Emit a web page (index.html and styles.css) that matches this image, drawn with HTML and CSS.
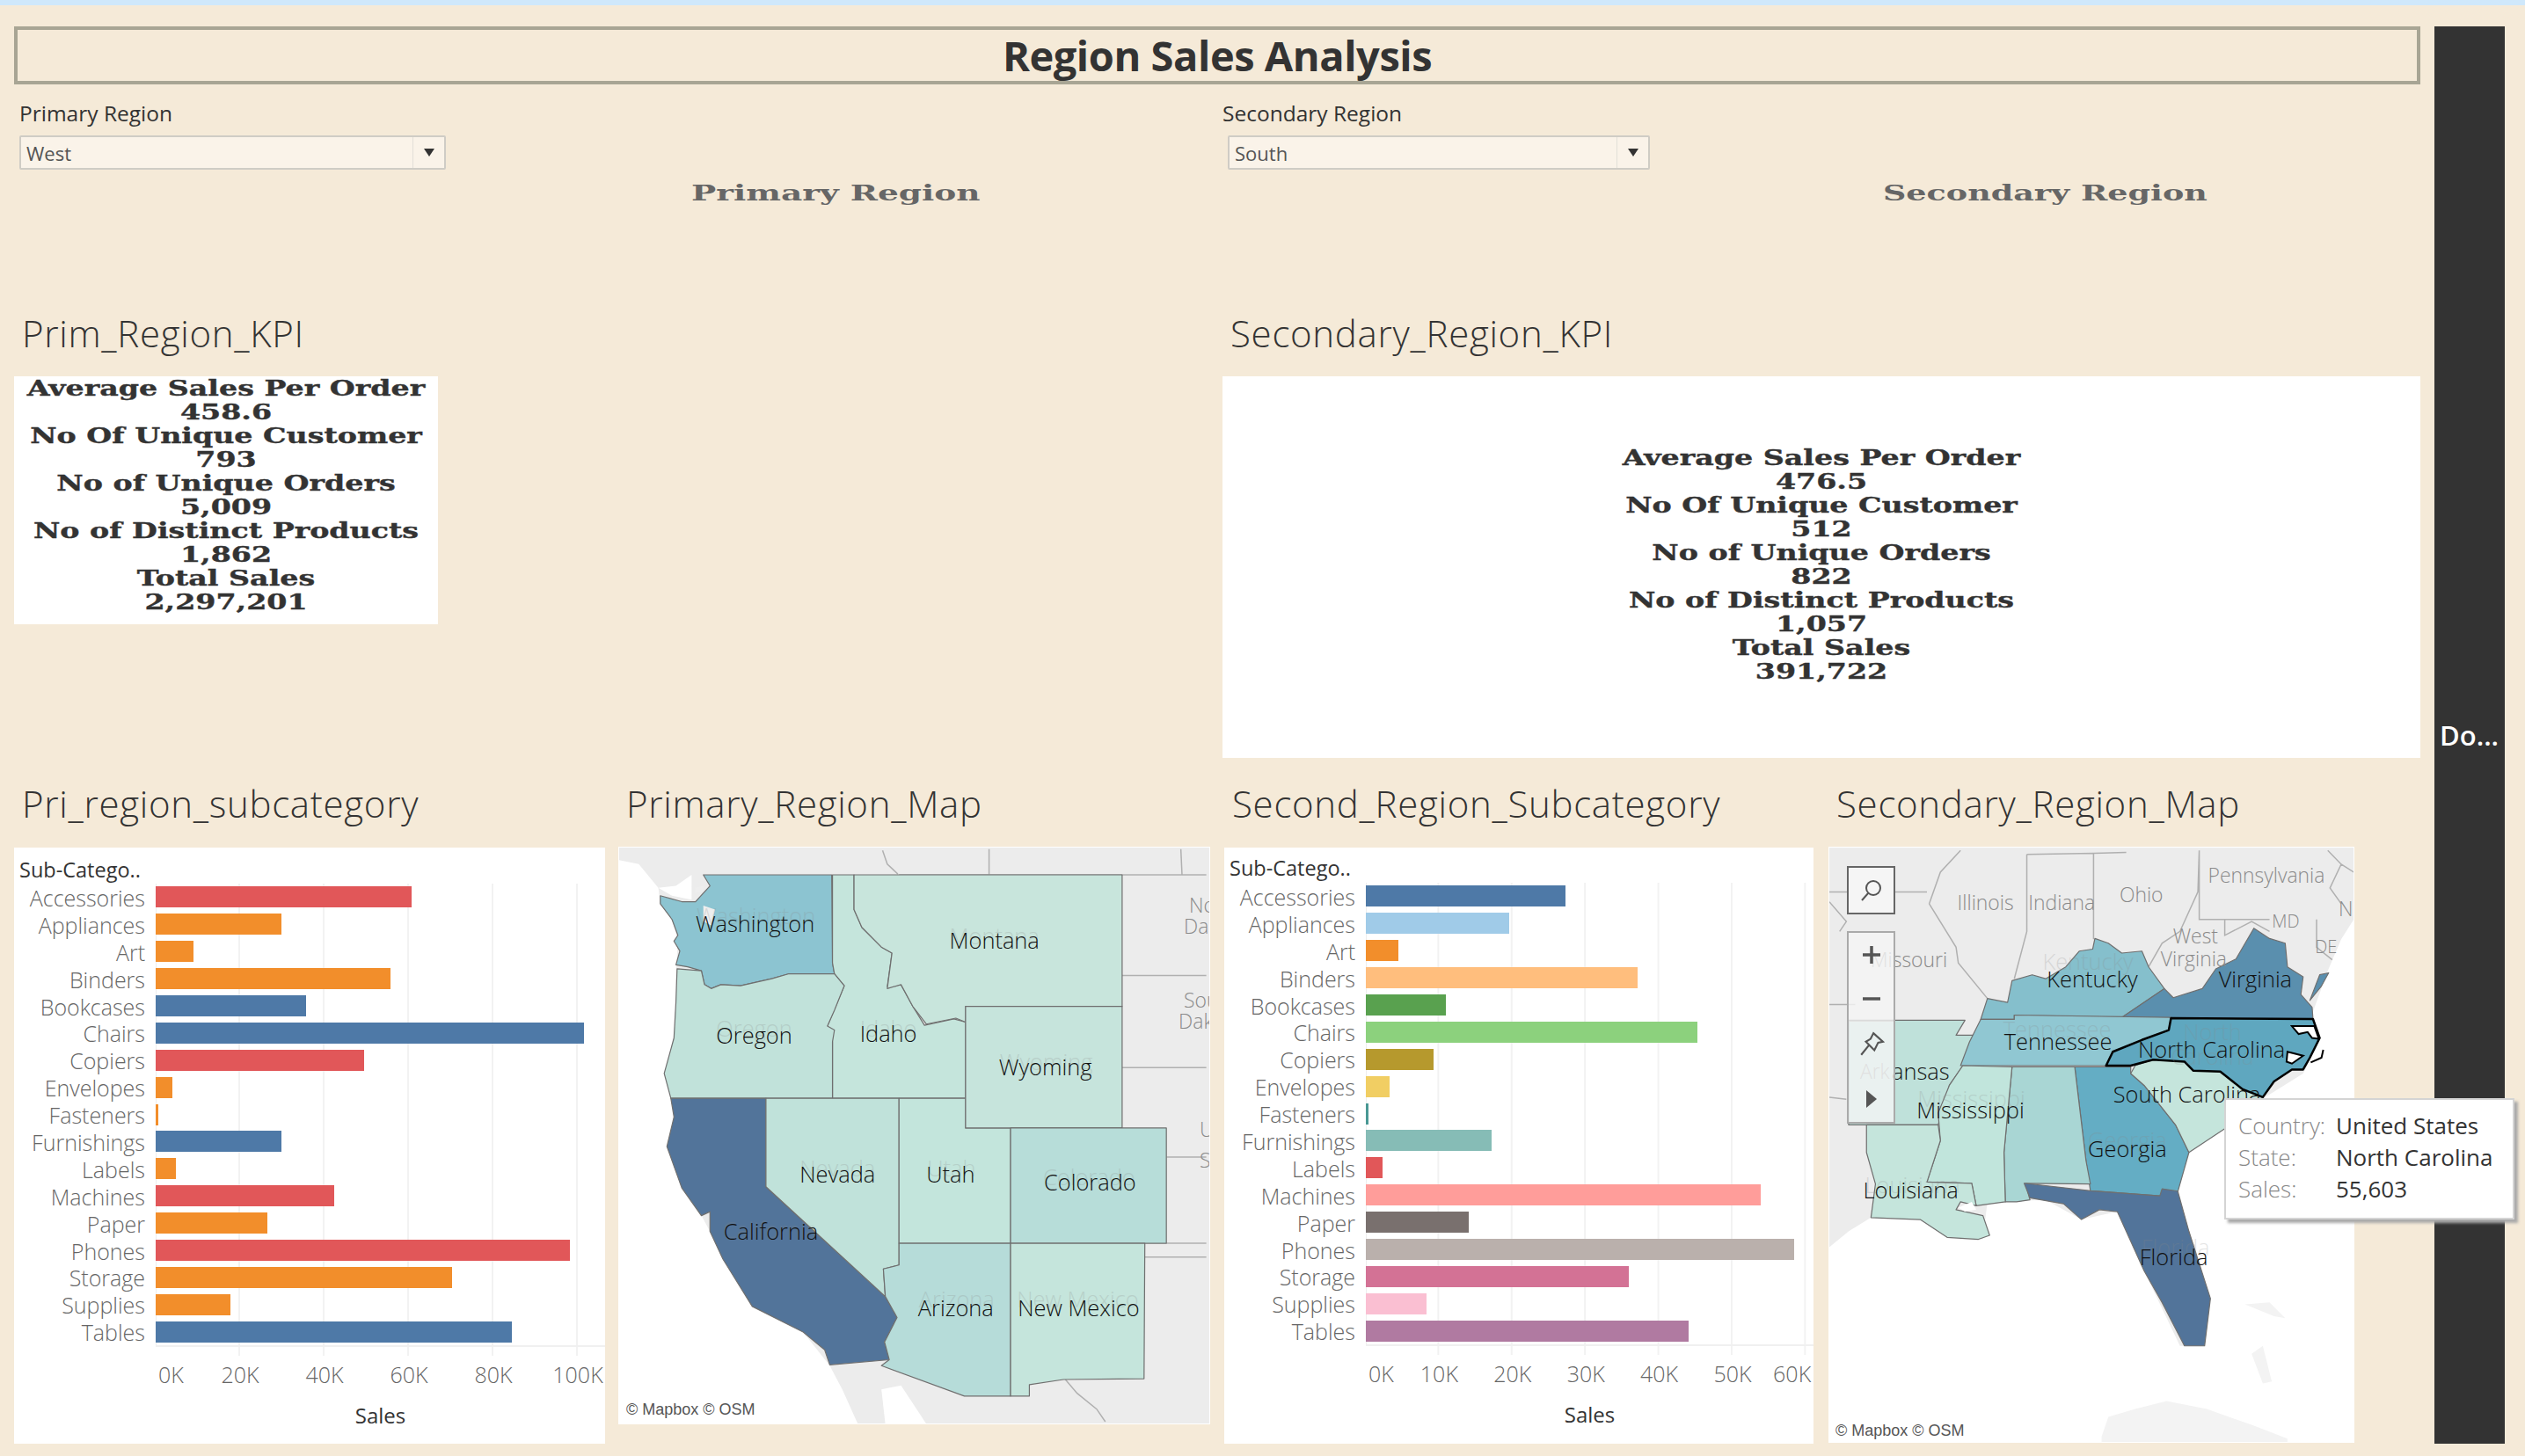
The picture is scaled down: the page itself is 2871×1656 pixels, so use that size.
FILE: index.html
```html
<!DOCTYPE html>
<html lang="en">
<head>
<meta charset="utf-8">
<title>Region Sales Analysis</title>
<link rel="stylesheet" href="styles.css">
</head>
<body>
<div class="strip"></div>
<div class="dash">
  <main class="main">
    <h1 class="title">Region Sales Analysis</h1>
    <section class="upper">
      <div class="col">
        <div class="filter-label">Primary Region</div>
        <div class="select"><span class="select-value">West</span><span class="select-btn"><i class="arrow"></i></span></div>
        <h2 class="slab slab-a">Primary Region</h2>
        <h3 class="sheet-title kpi-title">Prim_Region_KPI</h3>
        <div class="kpi kpi-a">
          <p>Average Sales Per Order</p><p>458.6</p><p>No Of Unique Customer</p><p>793</p><p>No of Unique Orders</p><p>5,009</p><p>No of Distinct Products</p><p>1,862</p><p>Total Sales</p><p>2,297,201</p>
        </div>
      </div>
      <div class="col">
        <div class="filter-label">Secondary Region</div>
        <div class="select select-b"><span class="select-value">South</span><span class="select-btn"><i class="arrow"></i></span></div>
        <h2 class="slab slab-b">Secondary Region</h2>
        <h3 class="sheet-title kpi-title">Secondary_Region_KPI</h3>
        <div class="kpi kpi-b">
          <p>Average Sales Per Order</p><p>476.5</p><p>No Of Unique Customer</p><p>512</p><p>No of Unique Orders</p><p>822</p><p>No of Distinct Products</p><p>1,057</p><p>Total Sales</p><p>391,722</p>
        </div>
      </div>
    </section>
    <section class="lower">
      <div class="cell">
        <h3 class="sheet-title">Pri_region_subcategory</h3>
        <div class="chart chart-a">
          <div class="chart-head">Sub-Catego..</div>
          <div class="chart-body">
            <div class="labels"><div>Accessories</div><div>Appliances</div><div>Art</div><div>Binders</div><div>Bookcases</div><div>Chairs</div><div>Copiers</div><div>Envelopes</div><div>Fasteners</div><div>Furnishings</div><div>Labels</div><div>Machines</div><div>Paper</div><div>Phones</div><div>Storage</div><div>Supplies</div><div>Tables</div></div>
            <div class="axis-col">
              <div class="plot">
                <div class="row"><span class="bar red" style="width:291px"></span></div>
                <div class="row"><span class="bar orange" style="width:143px"></span></div>
                <div class="row"><span class="bar orange" style="width:43px"></span></div>
                <div class="row"><span class="bar orange" style="width:267px"></span></div>
                <div class="row"><span class="bar blue" style="width:171px"></span></div>
                <div class="row"><span class="bar blue" style="width:487px"></span></div>
                <div class="row"><span class="bar red" style="width:237px"></span></div>
                <div class="row"><span class="bar orange" style="width:19px"></span></div>
                <div class="row"><span class="bar orange" style="width:3px"></span></div>
                <div class="row"><span class="bar blue" style="width:143px"></span></div>
                <div class="row"><span class="bar orange" style="width:23px"></span></div>
                <div class="row"><span class="bar red" style="width:203px"></span></div>
                <div class="row"><span class="bar orange" style="width:127px"></span></div>
                <div class="row"><span class="bar red" style="width:471px"></span></div>
                <div class="row"><span class="bar orange" style="width:337px"></span></div>
                <div class="row"><span class="bar orange" style="width:85px"></span></div>
                <div class="row"><span class="bar blue" style="width:405px"></span></div>
              </div>
              <div class="tickmarks"></div>
              <div class="ticks"><span class="tick-zero">0K</span><span>20K</span><span>40K</span><span>60K</span><span>80K</span><span>100K</span></div>
              <div class="axis-title">Sales</div>
            </div>
          </div>
        </div>
      </div>
      <div class="cell">
        <h3 class="sheet-title">Primary_Region_Map</h3>
        <div class="map map-a">
          <svg class="map-svg" viewBox="0 0 673 657" role="img" aria-label="Primary region map">
            <g transform="scale(.4464 .4505) translate(-30 -28)">
              <rect class="land" x="30" y="28" width="1510" height="1460"/>
              <path class="ocean" d="M30 60 L80 70 L130 130 L135 170 L165 210 L180 265 L175 340 L175 420 L170 510 L145 600 L162 663 L170 710 L152 785 L190 890 L240 960 L262 1000 L295 1070 L370 1190 L500 1255 L568 1340 L600 1400 L640 1488 L30 1488 Z"/>
              <path class="ocean" d="M700 1400 L750 1390 L790 1450 L815 1488 L710 1488 Z"/>
              <path class="ocean" d="M215 97 L175 125 L130 130 L165 150 L215 160 Z"/>
              <path class="nb" d="M703 35 L715 70 L742 95 M975 32 L975 97 M1465 32 L1468 97 M745 97 L1530 97 M1315 352 L1530 352 M1315 585 L1530 585 M1428 812 L1530 812 M1428 1030 L1530 1030 M1373 1065 L1530 1065 M1170 1375 L1200 1410 L1250 1450 L1272 1482"/>
              <path class="st f-wa" d="M245 97 L573 97 L575 320 L580 348 L462 348 L420 360 L340 378 L290 375 L265 385 L248 375 L240 340 L205 330 L175 325 L185 290 L170 265 L180 250 L165 210 L135 170 L135 150 L190 165 L225 165 L262 125 L245 97 Z"/>
              <path class="hole" d="M225 130 L245 125 L245 140 L225 142 Z M245 175 L275 185 L265 225 L245 215 Z"/>
              <path class="st f-id" d="M575 97 L630 97 L630 185 L650 230 L700 280 L727 295 L715 380 L750 375 L780 430 L810 478 L885 462 L915 470 L915 663 L575 663 L575 520 L562 480 L605 378 L580 348 L575 320 Z"/>
              <path class="st f-mt" d="M630 97 L1315 97 L1315 430 L915 430 L915 470 L890 460 L815 475 L780 430 L750 375 L715 385 L727 295 L700 280 L650 230 L630 185 Z"/>
              <path class="st f-or" d="M178 335 L240 340 L248 375 L265 385 L290 375 L340 378 L420 360 L462 348 L580 348 L605 378 L580 440 L562 480 L580 490 L575 520 L575 663 L162 663 L145 600 L170 510 L175 420 Z"/>
              <path class="st f-ca" d="M162 663 L405 663 L405 887 L710 1165 L740 1218 L708 1280 L720 1325 L568 1338 L555 1300 L500 1255 L370 1190 L295 1070 L262 1000 L262 950 L240 960 L190 890 L152 785 L170 710 Z"/>
              <path class="st f-nv" d="M405 663 L745 663 L745 1085 L705 1095 L710 1165 L405 887 Z"/>
              <path class="st f-ut" d="M745 663 L915 663 L915 738 L1030 738 L1030 1030 L745 1030 Z"/>
              <path class="st f-wy" d="M915 430 L1315 430 L1315 738 L915 738 Z"/>
              <path class="st f-co" d="M1030 738 L1428 738 L1428 1030 L1030 1030 Z"/>
              <path class="st f-az" d="M745 1030 L1030 1030 L1030 1417 L912 1417 L700 1340 L720 1325 L708 1280 L740 1218 L710 1165 L705 1095 L745 1085 Z"/>
              <path class="st f-nm" d="M1030 1030 L1373 1030 L1371 1373 L1165 1375 L1078 1388 L1078 1417 L1030 1417 Z"/>
              <path class="ocean" d="M380 1235 L430 1235 L425 1245 L395 1245 Z M485 1272 L500 1285 L490 1290 Z M483 1305 L498 1318 L488 1320 Z"/>
            </g>
            <text class="nb-label" x="650" y="74">North</text>
            <text class="nb-label" x="644" y="98">Dakota</text>
            <text class="nb-label" x="644" y="183">South</text>
            <text class="nb-label" x="638" y="207">Dakota</text>
            <text class="nb-label" x="662" y="330">United</text>
            <text class="nb-label" x="662" y="365">States</text>
            <text class="ghost" x="156" y="87" text-anchor="middle">Washington</text>
            <text class="ghost" x="428" y="110" text-anchor="middle">Montana</text>
            <text class="ghost" x="154" y="216" text-anchor="middle">Oregon</text>
            <text class="ghost" x="307" y="216" text-anchor="middle">Idaho</text>
            <text class="ghost" x="487" y="254" text-anchor="middle">Wyoming</text>
            <text class="ghost" x="249" y="375" text-anchor="middle">Nevada</text>
            <text class="ghost" x="379" y="375" text-anchor="middle">Utah</text>
            <text class="ghost" x="536" y="385" text-anchor="middle">Colorado</text>
            <text class="ghost" x="172" y="445" text-anchor="middle">California</text>
            <text class="ghost" x="385" y="525" text-anchor="middle">Arizona</text>
            <text class="ghost" x="523" y="525" text-anchor="middle">New Mexico</text>
            <text class="state" x="155" y="96" text-anchor="middle">Washington</text>
            <text class="state" x="428" y="115" text-anchor="middle">Montana</text>
            <text class="state" x="154" y="224" text-anchor="middle">Oregon</text>
            <text class="state" x="307" y="222" text-anchor="middle">Idaho</text>
            <text class="state" x="486" y="260" text-anchor="middle">Wyoming</text>
            <text class="state" x="249" y="382" text-anchor="middle">Nevada</text>
            <text class="state" x="378" y="382" text-anchor="middle">Utah</text>
            <text class="state" x="537" y="391" text-anchor="middle">Colorado</text>
            <text class="state" x="173" y="447" text-anchor="middle">California</text>
            <text class="state" x="384" y="535" text-anchor="middle">Arizona</text>
            <text class="state" x="524" y="535" text-anchor="middle">New Mexico</text>
          </svg>
          <div class="attrib attrib-a">© Mapbox © OSM</div>
        </div>
      </div>
      <div class="cell">
        <h3 class="sheet-title">Second_Region_Subcategory</h3>
        <div class="chart chart-b">
          <div class="chart-head">Sub-Catego..</div>
          <div class="chart-body">
            <div class="labels"><div>Accessories</div><div>Appliances</div><div>Art</div><div>Binders</div><div>Bookcases</div><div>Chairs</div><div>Copiers</div><div>Envelopes</div><div>Fasteners</div><div>Furnishings</div><div>Labels</div><div>Machines</div><div>Paper</div><div>Phones</div><div>Storage</div><div>Supplies</div><div>Tables</div></div>
            <div class="axis-col">
              <div class="plot">
                <div class="row"><span class="bar c1" style="width:227px"></span></div>
                <div class="row"><span class="bar c2" style="width:163px"></span></div>
                <div class="row"><span class="bar c3" style="width:37px"></span></div>
                <div class="row"><span class="bar c4" style="width:309px"></span></div>
                <div class="row"><span class="bar c5" style="width:91px"></span></div>
                <div class="row"><span class="bar c6" style="width:377px"></span></div>
                <div class="row"><span class="bar c7" style="width:77px"></span></div>
                <div class="row"><span class="bar c8" style="width:27px"></span></div>
                <div class="row"><span class="bar c9" style="width:3px"></span></div>
                <div class="row"><span class="bar c10" style="width:143px"></span></div>
                <div class="row"><span class="bar c11" style="width:19px"></span></div>
                <div class="row"><span class="bar c12" style="width:449px"></span></div>
                <div class="row"><span class="bar c13" style="width:117px"></span></div>
                <div class="row"><span class="bar c14" style="width:487px"></span></div>
                <div class="row"><span class="bar c15" style="width:299px"></span></div>
                <div class="row"><span class="bar c16" style="width:69px"></span></div>
                <div class="row"><span class="bar c17" style="width:367px"></span></div>
              </div>
              <div class="tickmarks"></div>
              <div class="ticks"><span class="tick-zero">0K</span><span>10K</span><span>20K</span><span>30K</span><span>40K</span><span>50K</span><span class="tick-last">60K</span></div>
              <div class="axis-title">Sales</div>
            </div>
          </div>
        </div>
      </div>
      <div class="cell">
        <h3 class="sheet-title">Secondary_Region_Map</h3>
        <div class="map map-b">
          <svg class="map-svg" viewBox="0 0 598 678" role="img" aria-label="Secondary region map">
            <g transform="scale(.5109 .4505) translate(-17 -28)">
              <rect class="land" x="17" y="28" width="1172" height="1510"/>
              <path class="ocean" d="M1188 210 L1160 260 L1130 340 L1095 450 L1110 520 L1075 600 L990 660 L900 740 L820 800 L795 900 L860 1150 L850 1290 L800 1290 L720 1100 L660 950 L580 970 L500 920 L370 925 L360 1020 L280 1015 L220 970 L110 965 L60 1000 L17 1040 L17 1538 L1188 1538 Z"/>
              <path class="cuba" d="M625 1520 L640 1470 L700 1450 L770 1430 L860 1450 L960 1490 L1040 1525 L1040 1538 L625 1538 Z M960 1310 L985 1290 L1005 1380 L985 1385 Z M945 1185 L1000 1180 L1035 1220 L1010 1215 Z"/>
              <path class="nb" d="M458 45 L458 240 L430 360 M607 42 L607 260 M458 45 L607 42 L680 40 M843 35 L843 210 L1000 210 M240 170 L265 90 L310 35 M240 170 L300 280 L305 320 L370 410 M17 140 L235 140 M17 425 L75 425 M900 210 L900 250 L960 215 L1000 240 M1105 210 L1105 280 L1140 312 M1130 35 L1160 70 L1188 90 M1160 70 L1135 130 L1160 170 M730 330 L760 270 L800 240 L840 140 L843 35 M17 165 L55 215 L40 240 M17 660 L55 665"/>
              <path class="st f-ar" d="M60 465 L320 465 L300 503 L340 503 L315 580 L285 630 L260 730 L60 730 Z"/>
              <path class="st f-ky" d="M370 410 L415 420 L425 365 L470 350 L500 360 L545 330 L575 290 L605 285 L610 258 L640 270 L670 295 L715 290 L730 330 L765 385 L670 458 L430 452 L430 463 L355 463 Z"/>
              <path class="st f-va" d="M670 458 L765 385 L785 408 L850 385 L880 335 L925 310 L965 232 L1000 258 L1035 270 L1040 330 L1075 355 L1070 400 L1095 432 L1097 462 L780 460 Z"/>
              <path class="st f-va" d="M1090 415 L1112 350 L1132 345 L1115 380 Z"/>
              <path class="st f-tn" d="M355 463 L430 463 L430 452 L780 458 L775 490 L715 515 L650 545 L635 580 L310 580 L330 520 Z"/>
              <path class="st f-ga" d="M565 583 L690 583 L690 600 L720 630 L790 730 L820 800 L795 900 L755 910 L600 897 L590 820 Z"/>
              <path class="st f-sc" d="M740 565 L810 570 L830 593 L890 595 L985 660 L900 740 L820 800 L790 730 L720 630 L690 600 L700 580 Z"/>
              <path class="st f-al" d="M425 583 L565 583 L590 820 L600 880 L455 878 L465 920 L435 925 L410 925 L407 800 Z"/>
              <path class="st f-ms" d="M315 580 L425 583 L407 800 L410 925 L345 935 L335 878 L235 875 L265 770 L260 700 L285 630 Z"/>
              <path class="st f-la" d="M100 730 L260 730 L265 770 L235 875 L335 878 L345 935 L310 925 L300 945 L360 960 L375 1010 L350 1020 L280 1015 L220 970 L110 965 L120 880 L100 800 Z"/>
              <path class="st f-fl" d="M452 878 L600 897 L755 910 L760 892 L795 898 L820 1000 L868 1170 L855 1290 L810 1290 L760 1180 L720 1100 L660 950 L620 945 L580 970 L540 930 L465 915 Z"/>
              <path class="st-sel f-nc" d="M780 460 L1097 462 L1112 510 L1090 560 L1075 590 L1050 590 L1010 620 L985 660 L940 640 L890 595 L830 593 L810 570 L740 565 L690 580 L635 580 L650 545 L715 515 L775 490 Z"/>
              <path class="sound" d="M1050 480 L1065 500 L1085 495 L1095 510 L1110 512 L1100 480 Z M1040 545 L1075 555 L1050 575 L1038 570 Z"/>
              <path class="st-line" d="M1120 540 L1116 560 L1092 572"/>
              <path class="ocean" d="M305 940 L335 925 L345 945 L320 950 Z"/>
            </g>
            <g transform="translate(0 -2)">
              <text class="nb-label" x="432" y="42">Pennsylvania</text>
              <text class="nb-label" x="146" y="73">Illinois</text>
              <text class="nb-label" x="227" y="73">Indiana</text>
              <text class="nb-label" x="331" y="64">Ohio</text>
              <text class="nb-label" x="581" y="80">N.</text>
              <text class="nb-label small" x="505" y="93">MD</text>
              <text class="nb-label" x="392" y="111">West</text>
              <text class="nb-label" x="378" y="137">Virginia</text>
              <text class="nb-label small" x="554" y="122">DE</text>
              <text class="nb-label" x="47" y="138">Missouri</text>
              <text class="nb-label" x="35" y="266">Ark</text>
              <text class="ghost" x="295" y="141" text-anchor="middle">Kentucky</text>
              <text class="ghost" x="260" y="219" text-anchor="middle">Tennessee</text>
              <text class="ghost" x="437" y="222" text-anchor="middle">North</text>
              <text class="ghost" x="437" y="250" text-anchor="middle">Carolina</text>
              <text class="ghost" x="162" y="298" text-anchor="middle">Mississippi</text>
              <text class="ghost" x="340" y="345" text-anchor="middle">Georgia</text>
              <text class="ghost" x="95" y="396" text-anchor="middle">Louisiana</text>
              <text class="ghost" x="395" y="467" text-anchor="middle">Florida</text>
              <text class="state" x="300" y="161" text-anchor="middle">Kentucky</text>
              <text class="state" x="486" y="161" text-anchor="middle">Virginia</text>
              <text class="state" x="261" y="233" text-anchor="middle">Tennessee</text>
              <text class="state" x="436" y="242" text-anchor="middle">North Carolina</text>
              <text class="state" x="137" y="267" text-anchor="end">ansas</text>
              <text class="state" x="161" y="311" text-anchor="middle">Mississippi</text>
              <text class="state" x="408" y="293" text-anchor="middle">South Carolina</text>
              <text class="state" x="340" y="355" text-anchor="middle">Georgia</text>
              <text class="state" x="93" y="402" text-anchor="middle">Louisiana</text>
              <text class="state" x="393" y="478" text-anchor="middle">Florida</text>
            </g>
          </svg>
          <div class="map-search">
            <svg class="ctl-icon" viewBox="0 0 28 28"><circle cx="16" cy="11" r="8"/><path d="M10 17 L3 25"/></svg>
          </div>
          <div class="map-tools">
            <div class="tool"><svg class="ctl-icon" viewBox="0 0 28 28"><path class="thick" d="M14 4 V24 M4 14 H24"/></svg></div>
            <div class="tool"><svg class="ctl-icon" viewBox="0 0 28 28"><path class="thick" d="M4 14 H24"/></svg></div>
            <div class="tool tool-pin"><svg class="ctl-icon pin-icon" viewBox="0 0 28 28"><path d="M16 2 L26 11 L21 12 L17 20 L14 17 L8 11 L13 8 Z M11 15 L3 25"/></svg></div>
            <div class="tool tool-play"><i class="play"></i></div>
          </div>
          <div class="attrib attrib-b">© Mapbox © OSM</div>
        </div>
      </div>
    </section>
  </main>
  <aside class="side">Do...</aside>
</div>
<div class="tooltip">
  <span class="tt-key">Country:</span><span class="tt-val">United States</span>
  <span class="tt-key">State:</span><span class="tt-val">North Carolina</span>
  <span class="tt-key">Sales:</span><span class="tt-val">55,603</span>
</div>
</body>
</html>
```
FILE: styles.css
```css
* { box-sizing: border-box; }
html, body { margin: 0; padding: 0; }
html { height: 1656px; overflow: hidden; }
body {
  position: relative;
  width: 2871px;
  height: 1656px;
  overflow: hidden;
  background: #f5ead8;
  font-family: "Open Sans", "Liberation Sans", sans-serif;
  color: #333;
}
h1, h2, h3, p { margin: 0; font-weight: normal; }
.strip { height: 6px; background: #cfe8fb; }
.dash { display: flex; gap: 16px; padding: 24px 0 0 16px; }
.main { width: 2736px; }
.side {
  width: 80px;
  height: 1612px;
  background: #333;
  color: #fff;
  display: flex;
  align-items: center;
  padding-left: 6px;
  font-size: 31px;
  font-weight: 600;
}
.title {
  height: 66px;
  border: 4px solid #a8a594;
  text-align: center;
  font-size: 47px;
  line-height: 58px;
  font-weight: 700;
  letter-spacing: -.45px;
  color: #333;
}
.upper { display: grid; grid-template-columns: 1374px 1362px; height: 766px; }
.col { min-width: 0; }
.filter-label { padding: 17px 0 0 6px; font-size: 24.5px; line-height: 32px; height: 50px; }
.col:nth-child(2) .filter-label { padding-left: 0; }
.select {
  display: flex;
  width: 485px;
  height: 39px;
  margin: 8px 0 0 6px;
  background: #faf3e9;
  border: 2px solid #cfccc5;
  border-radius: 2px;
  font-size: 22px;
  line-height: 36px;
  color: #555;
}
.select-b { width: 480px; }
.select-value { flex: 1; padding-left: 6px; }
.select-btn { width: 36px; border-left: 1px solid #e2dfd8; display: flex; align-items: center; justify-content: center; }
.arrow { width: 0; height: 0; border-left: 6px solid transparent; border-right: 6px solid transparent; border-top: 9px solid #333; }
.slab {
  font-family: "DejaVu Serif", "Liberation Serif", serif;
  font-weight: 700;
  font-size: 25px;
  line-height: 40px;
  color: #666;
  margin-top: 7px;
  height: 40px;
  width: 240px;
  white-space: nowrap;
  transform: scaleX(1.5);
  transform-origin: left center;
}
.slab-a { margin-left: 770px; }
.slab-b { margin-left: 751px; transform: scaleX(1.46); }
.sheet-title {
  font-weight: 300;
  font-size: 42px;
  line-height: 56px;
  letter-spacing: .7px;
  padding-left: 9px;
  color: #333;
}
.kpi-title { margin-top: 111px; }
.kpi {
  margin-top: 21px;
  background: #fff;
  font-family: "DejaVu Serif", "Liberation Serif", serif;
  font-size: 25px;
  line-height: 27px;
  text-align: center;
  color: #333;
}
.kpi p { font-weight: 700; transform: scaleX(1.33); -webkit-text-stroke: .4px #333; }
.kpi-a { width: 482px; height: 282px; overflow: hidden; }
.kpi-b { width: 1362px; height: 434px; display: flex; flex-direction: column; justify-content: center; padding-bottom: 6px; }
.lower { display: grid; grid-template-columns: 687px 689px 687px 673px; padding-top: 24px; }
.lower .sheet-title { height: 77px; }
.chart { background: #fff; height: 678px; margin-top: 1px; }
.chart-a { width: 672px; padding-top: 13px; }
.chart-b { width: 670px; padding-top: 11px; }
.chart-head { font-size: 23.5px; line-height: 24px; padding-left: 6px; color: #333; height: 28px; }
.chart-b .chart-head { height: 29px; }
.chart-body { display: flex; font-weight: 300; color: #666; font-size: 25px; }
.labels { width: 161px; padding-right: 12px; text-align: right; white-space: nowrap; }
.labels div { height: 30.9px; line-height: 32px; }
.axis-col { flex: 1; min-width: 0; }
.plot {
  border-bottom: 2px solid #f0f0f0;
  box-shadow: inset 1px 0 0 #eee;
}
.chart-a .plot, .chart-a .tickmarks {
  background-image: linear-gradient(to right, transparent 94px, #f2f2f2 94px, #f2f2f2 96px);
  background-size: 96px 100%;
}
.chart-b .plot, .chart-b .tickmarks {
  background-image: linear-gradient(to right, transparent 81.4px, #f2f2f2 81.4px, #f2f2f2 83.4px);
  background-size: 83.4px 100%;
}
.row { height: 30.9px; display: flex; align-items: center; }
.bar { display: block; height: 24px; }
.tickmarks { height: 10px; }
.ticks { display: flex; margin-top: 7px; line-height: 28px; height: 28px; text-align: center; white-space: nowrap; }
.ticks span { flex: none; }
.chart-a .ticks span { width: 96px; }
.chart-a .ticks .tick-zero { width: 48px; }
.chart-b .ticks span { width: 83.4px; }
.chart-b .ticks .tick-zero { width: 41.7px; }
.chart-b .ticks .tick-last { width: 52px; }
.ticks .tick-zero { text-align: left; padding-left: 3px; }
.axis-title { text-align: center; margin-top: 19px; line-height: 28px; font-size: 24px; font-weight: 400; color: #333; }
.red { background: #e15759; }
.orange { background: #f28e2b; }
.blue { background: #4e79a7; }
.c1 { background: #4e79a7; } .c2 { background: #a0cbe8; } .c3 { background: #f28e2b; }
.c4 { background: #ffbe7d; } .c5 { background: #59a14f; } .c6 { background: #8cd17d; }
.c7 { background: #b6992d; } .c8 { background: #f1ce63; } .c9 { background: #499894; }
.c10 { background: #86bcb6; } .c11 { background: #e15759; } .c12 { background: #ff9d9a; }
.c13 { background: #79706e; } .c14 { background: #bab0ac; } .c15 { background: #d37295; }
.c16 { background: #fabfd2; } .c17 { background: #b07aa1; }
.map { position: relative; background: #fff; overflow: hidden; border: 1px solid #fff; }
.map-a { width: 673px; height: 657px; }
.map-b { width: 598px; height: 678px; }
.map-svg { display: block; width: 100%; height: 100%; }
.land { fill: #ececec; }
.ocean { fill: #fff; }
.cuba { fill: #f3f3f3; }
.nb { fill: none; stroke: #b0b0b0; stroke-width: 1.5px; vector-effect: non-scaling-stroke; }
.st { stroke: #6f6f6f; stroke-width: 1.2px; vector-effect: non-scaling-stroke; stroke-linejoin: round; }
.st-sel { stroke: #000; stroke-width: 2.5px; vector-effect: non-scaling-stroke; stroke-linejoin: round; }
.st-line { fill: none; stroke: #000; stroke-width: 2px; vector-effect: non-scaling-stroke; }
.hole { fill: #eee; }
.sound { fill: #fff; stroke: #000; stroke-width: 2px; vector-effect: non-scaling-stroke; }
.f-wa { fill: #8cc4d1; } .f-id { fill: #c5e5dc; } .f-mt { fill: #c8e5dc; } .f-or { fill: #c1e2da; }
.f-ca { fill: #52749a; } .f-nv { fill: #c0e2da; } .f-ut { fill: #c3e5dc; } .f-wy { fill: #c6e4dc; }
.f-co { fill: #b7ddd9; } .f-az { fill: #b6dcd9; } .f-nm { fill: #c5e5dc; }
.f-ky { fill: #85bfcc; } .f-va { fill: #5a8fae; } .f-tn { fill: #90c7d2; } .f-nc { fill: #5fa7bf; }
.f-sc { fill: #c5e5dc; } .f-ga { fill: #64adc4; } .f-al { fill: #a9d6d4; } .f-ms { fill: #c1e5dc; }
.f-ar { fill: #bfe1da; } .f-la { fill: #c5e5dc; } .f-fl { fill: #52749a; }
.state { font-size: 25.5px; font-weight: 300; fill: #111; }
.ghost { font-size: 25.5px; font-weight: 300; fill: #888; opacity: .22; }
.nb-label { font-size: 23px; font-weight: 300; fill: #8a8a8a; }
.nb-label.small { font-size: 20px; }
.attrib {
  position: absolute;
  font-family: "Liberation Sans", sans-serif;
  font-size: 18px;
  line-height: 24px;
  color: #555;
  background: rgba(255, 255, 255, .75);
  padding: 0 3px;
}
.attrib-a { left: 5px; top: 627px; }
.attrib-b { left: 4px; top: 651px; }
.map-search {
  position: absolute;
  left: 20px;
  top: 21px;
  width: 55px;
  height: 55px;
  background: #f5f5f5;
  border: 2px solid #666;
  display: flex;
  align-items: center;
  justify-content: center;
}
.map-tools {
  position: absolute;
  left: 20px;
  top: 95px;
  width: 55px;
  height: 219px;
  background: rgba(245, 245, 245, .8);
  border: 2px solid #aaa;
  display: flex;
  flex-direction: column;
  align-items: center;
}
.tool { height: 50px; display: flex; align-items: center; justify-content: center; flex: none; }
.tool-pin { height: 52px; width: 100%; border-top: 1px solid #e2e2e2; }
.tool-play { height: 74px; }
.ctl-icon { width: 28px; height: 28px; fill: none; stroke: #555; stroke-width: 2px; }
.pin-icon { width: 30px; height: 30px; }
.ctl-icon .thick { stroke-width: 3.5px; }
.play { width: 0; height: 0; border-top: 10px solid transparent; border-bottom: 10px solid transparent; border-left: 12px solid #555; }
.tooltip {
  position: absolute;
  left: 2529px;
  top: 1249px;
  width: 330px;
  height: 138px;
  background: #fff;
  border: 2px solid #d4d4d4;
  box-shadow: 4px 4px 3px #aaa;
  padding: 11px 0 0 14px;
  display: grid;
  grid-template-columns: 111px 1fr;
  grid-auto-rows: 36px;
  font-size: 26px;
  line-height: 36px;
}
.tt-key { color: #888; font-weight: 300; }
.tt-val { color: #333; }
```
